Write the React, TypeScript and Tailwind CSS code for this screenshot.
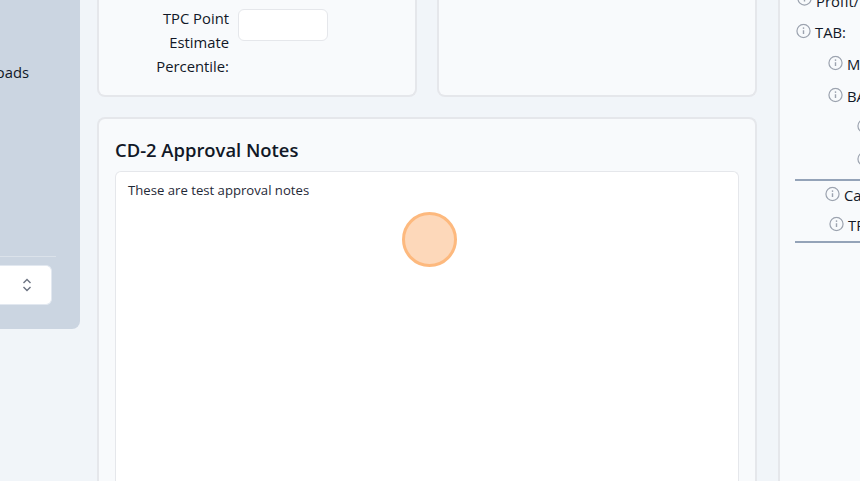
const font = { fontFamily: '"Open Sans", "Noto Sans", sans-serif' };

function Info({ className = "-translate-y-[1.5px]" }: { className?: string }) {
  return (
    <svg viewBox="0 0 16 16" className={`h-[15px] w-[15px] shrink-0 text-[#9ca3af] ${className}`} fill="none" stroke="currentColor">
      <circle cx="8" cy="8" r="7" strokeWidth="1.3" />
      <path d="M8 7.2v4" strokeWidth="1.5" />
      <circle cx="8" cy="4.9" r="0.9" fill="currentColor" stroke="none" />
    </svg>
  );
}

function Row({ label, pad, h, iconClass }: { label: string; pad: string; h: string; iconClass?: string }) {
  return (
    <div className={`flex items-center gap-[4px] whitespace-nowrap ${pad} ${h}`}>
      <Info className={iconClass} />
      <span>{label}</span>
    </div>
  );
}

export default function App() {
  return (
    <div className="relative flex h-[481px] w-[860px] overflow-hidden bg-[#f1f5f9] text-[14.8px] text-[#111827]" style={font}>
      {/* left navigation */}
      <aside className="flex h-[329px] w-[80px] shrink-0 flex-col overflow-hidden rounded-br-lg bg-[#cbd5e1]">
        <div className="mt-[60px] flex h-[24px] items-center justify-end pr-[51px] leading-6">
          <span className="whitespace-nowrap">Downloads</span>
        </div>
        <div className="mt-[172px] mr-[24px] border-t border-[#dbe2ea]" />
        <div className="mt-[8px] mr-[28px] flex h-[40px] items-center justify-end rounded-r-md border border-l-0 border-[#e2e8f0] bg-white pr-[16px]">
          <svg viewBox="0 0 16 16" className="h-[16px] w-[16px] text-[#6b7280]" fill="none" stroke="currentColor" strokeWidth="1.4">
            <path d="M4.5 6 8 2.5 11.5 6" />
            <path d="M4.5 10 8 13.5 11.5 10" />
          </svg>
        </div>
      </aside>

      {/* main column */}
      <main className="ml-[17px] flex w-[660px] shrink-0 flex-col">
        <div className="flex h-[97px] shrink-0 gap-[20px]">
          <section className="flex h-full w-[320px] items-start rounded-b-lg border-x-2 border-b-2 border-[#e5e7eb] bg-[#f8fafc] pt-[6px]">
            <div className="w-[130px] text-right leading-6">
              TPC Point
              <br />
              Estimate
              <br />
              Percentile:
            </div>
            <div className="mt-[3px] ml-[9px] h-[32px] w-[90px] rounded-md border border-[#e5e7eb] bg-white" />
          </section>
          <section className="h-full w-[320px] rounded-b-lg border-x-2 border-b-2 border-[#e5e7eb] bg-[#f8fafc]" />
        </div>
        <section className="mt-[20px] flex flex-1 flex-col rounded-t-lg border-x-2 border-t-2 border-[#e5e7eb] bg-[#f8fafc] px-[16px] pt-[17px]">
          <h2 className="h-[28px] text-[18.4px] leading-7 font-semibold">CD-2 Approval Notes</h2>
          <div className="mt-[7px] flex-1 rounded-t-md border border-b-0 border-[#e5e7eb] bg-white px-[12px] py-[8px] text-[13.15px] leading-5 text-[#1f2937]">
            These are test approval notes
          </div>
        </section>
      </main>

      {/* right panel */}
      <aside className="ml-[21px] min-w-0 flex-1 overflow-hidden border-l-2 border-[#e5e7eb] bg-[#f8fafc] pl-[15px]">
        <div className="-mt-[14px] w-[200px]">
          <Row label="Profit/" pad="pl-[2px]" h="h-[30px]" iconClass="-translate-y-[3px]" />
          <Row label="TAB:" pad="pl-[1px]" h="h-[32px]" />
          <Row label="Margin" pad="pl-[33px]" h="h-[32px]" />
          <Row label="BAC" pad="pl-[33px]" h="h-[32px]" />
          <Row label="Other" pad="pl-[62px]" h="h-[30px]" />
          <Row label="Other" pad="pl-[62px]" h="h-[37px]" />
          <div className="border-t-2 border-[#94a3b8]" />
          <Row label="Cash" pad="pl-[30px]" h="h-[28px]" />
          <Row label="TPC" pad="pl-[34px]" h="h-[32px]" />
          <div className="border-t-2 border-[#94a3b8]" />
        </div>
      </aside>

      {/* click highlight */}
      <div className="absolute top-[212px] left-[402px] h-[55px] w-[55px] rounded-full border-[3px] border-[#fdb97e] bg-[#fdd8ba]" />
    </div>
  );
}
